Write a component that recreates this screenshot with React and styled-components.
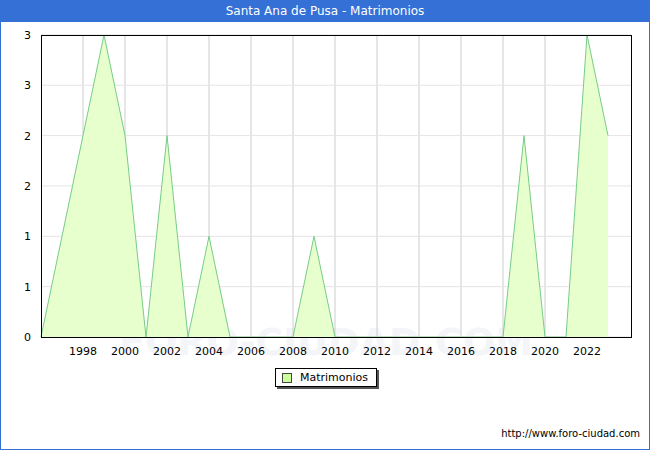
import React from "react";
import styled, { createGlobalStyle } from "styled-components";

const Global = createGlobalStyle`
  body { margin: 0; font-family: "DejaVu Sans", Verdana, sans-serif; }
`;

const Frame = styled.div`
  width: 650px;
  height: 450px;
  box-sizing: border-box;
  border: 1px solid #3470d5;
  border-top: none;
  background: #fff;
  display: flex;
  flex-direction: column;
`;
const TitleBar = styled.div`
  height: 22px;
  margin: 0 -1px;
  background: #3470d5;
  color: #fff;
  font-size: 12px;
  display: flex;
  align-items: center;
  justify-content: center;
`;
const Chart = styled.svg`
  display: block;
  font-family: "DejaVu Sans", Verdana, sans-serif;
  font-size: 11px;
`;
const LegendRow = styled.div`
  display: flex;
  justify-content: center;
  padding-left: 2px;
  margin-top: 6px;
`;
const Legend = styled.div`
  display: flex;
  align-items: center;
  gap: 8px;
  height: 17px;
  padding: 0 8px 0 6px;
  border: 1px solid #000;
  box-shadow: 2px 2px 0 #555;
  font-size: 11px;
`;
const Swatch = styled.span`
  width: 8px;
  height: 8px;
  border: 1px solid #444;
  background: #ccff99;
`;
const Footer = styled.div`
  margin-top: auto;
  padding: 0 9px 10px 0;
  text-align: right;
  font-size: 10px;
`;

const data = [0,1,2,3,2,0,2,0,1,0,0,0,0,1,0,0,0,0,0,0,0,0,0,2,0,0,3,2];
const X0 = 40, STEP = 21, Y0 = 315, YS = 100.7;
const px = i => X0 + i * STEP;
const py = v => Y0 - v * YS;

export default function App() {
  const pts = data.map((v, i) => `${px(i)},${py(v)}`).join(" ");
  const area = `${px(0)},${Y0} ${pts} ${px(data.length - 1)},${Y0}`;
  const grid = [];
  for (let i = 2; i < 28; i += 2) grid.push(px(i));
  const ylab = ["0", "1", "1", "2", "2", "3", "3"];
  return (
    <>
      <Global />
      <Frame>
        <TitleBar>Santa Ana de Pusa - Matrimonios</TitleBar>
        <Chart width="648" height="340">
          <text x="325" y="333" textAnchor="middle" fontSize="38" fill="#f4f5f9" fontWeight="bold">FORO-CIUDAD.COM</text>
          {grid.map(x => <line key={x} x1={x} x2={x} y1={13} y2={Y0} stroke="#ccc" />)}
          {ylab.map((l, i) => (
            <g key={i}>
              <line x1={40} x2={630} y1={Y0 - i * 50.35} y2={Y0 - i * 50.35} stroke="#e4e4e4" />
              <text x="30" y={Y0 - i * 50.35 + 4} textAnchor="end">{l}</text>
            </g>
          ))}
          <polygon points={area} fill="#e6ffcc" />
          <polyline points={pts} fill="none" stroke="#77cc88" strokeWidth="1" />
          <rect x="40.5" y="13.5" width="590" height={Y0 - 13} fill="none" stroke="#000" />
          {grid.map((x, i) => (
            <text key={x} x={x} y={Y0 + 18} textAnchor="middle">{1998 + i * 2}</text>
          ))}
        </Chart>
        <LegendRow>
          <Legend><Swatch />Matrimonios</Legend>
        </LegendRow>
        <Footer>http://www.foro-ciudad.com</Footer>
      </Frame>
    </>
  );
}
